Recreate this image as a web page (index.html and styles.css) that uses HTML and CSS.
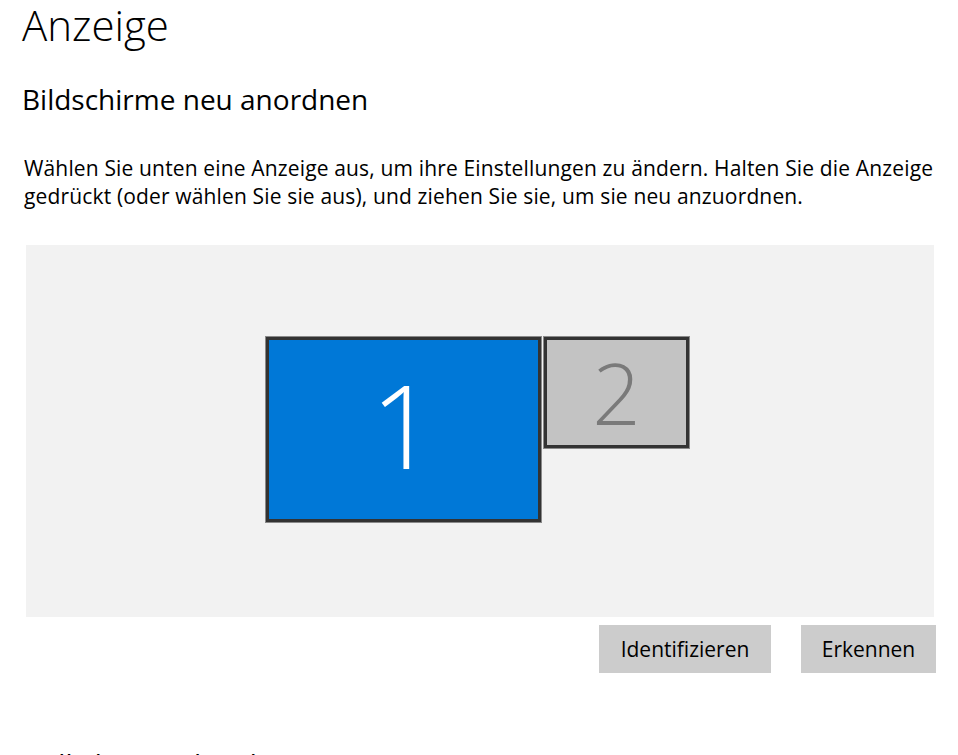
FILE: index.html
```html
<!DOCTYPE html>
<html lang="de">
<head>
    <meta charset="UTF-8">
    <meta name="viewport" content="width=device-width, initial-scale=1.0">
    <title>Anzeige</title>
    <link rel="stylesheet" href="styles.css">
</head>
<body>
    <main class="page">
        <h1 class="title">Anzeige</h1>
        <h2 class="section-title">Bildschirme neu anordnen</h2>
        <p class="hint">Wählen Sie unten eine Anzeige aus, um ihre Einstellungen zu ändern. Halten Sie die Anzeige gedrückt (oder wählen Sie sie aus), und ziehen Sie sie, um sie neu anzuordnen.</p>

        <!-- Anordnung der Bildschirme -->
        <div class="arrange">
            <div class="monitor monitor-main">1</div>
            <div class="monitor monitor-second">2</div>
        </div>

        <div class="actions">
            <button class="btn btn-identify">Identifizieren</button>
            <button class="btn btn-detect">Erkennen</button>
        </div>

        <h2 class="section-title section-next">Helligkeit und Farbe</h2>
    </main>
</body>
</html>
```

FILE: styles.css
```css
body {
    margin: 0;
    padding: 0;
    background-color: #fff;
    color: #000;
    font-family: "Open Sans", "Noto Sans", sans-serif;
    overflow: hidden;
    height: 755px;
}

.page {
    padding: 0 22px;
}

.title {
    margin: 0;
    font-size: 42px;
    font-weight: 300;
    line-height: 50px;
}

.section-title {
    margin: 29px 0 0 0;
    font-size: 28px;
    font-weight: 400;
    line-height: 40px;
}

.hint {
    margin: 35px 0 0 2px;
    font-size: 21px;
    line-height: 28px;
    letter-spacing: 0.15px;
}

/* Anordnung */
.arrange {
    display: flex;
    align-items: flex-start;
    gap: 3px;
    box-sizing: border-box;
    width: 908px;
    height: 372px;
    margin: 35px 0 0 4px;
    padding: 92px 0 0 240px;
    background-color: #f2f2f2;
}

.monitor {
    display: flex;
    justify-content: center;
    align-items: center;
    box-sizing: border-box;
    border: 3px solid #333;
    box-shadow: 0 0 0 1px #8a8a8a;
    font-weight: 300;
    line-height: 1;
}

.monitor-main {
    width: 275px;
    height: 185px;
    padding-bottom: 12px;
    background-color: #0078d7;
    color: #fff;
    font-size: 116px;
}

.monitor-second {
    width: 145px;
    height: 111px;
    background-color: #c3c3c3;
    color: #7a7a7a;
    font-size: 85px;
}

.actions {
    display: flex;
    justify-content: flex-end;
    gap: 30px;
    margin-top: 8px;
}

.btn {
    height: 48px;
    padding: 0;
    border: none;
    background-color: #ccc;
    color: #000;
    font-family: inherit;
    font-size: 21px;
}

.btn-identify {
    width: 172px;
}

.btn-detect {
    width: 135px;
}

.section-next {
    margin-top: 71px;
}
```
